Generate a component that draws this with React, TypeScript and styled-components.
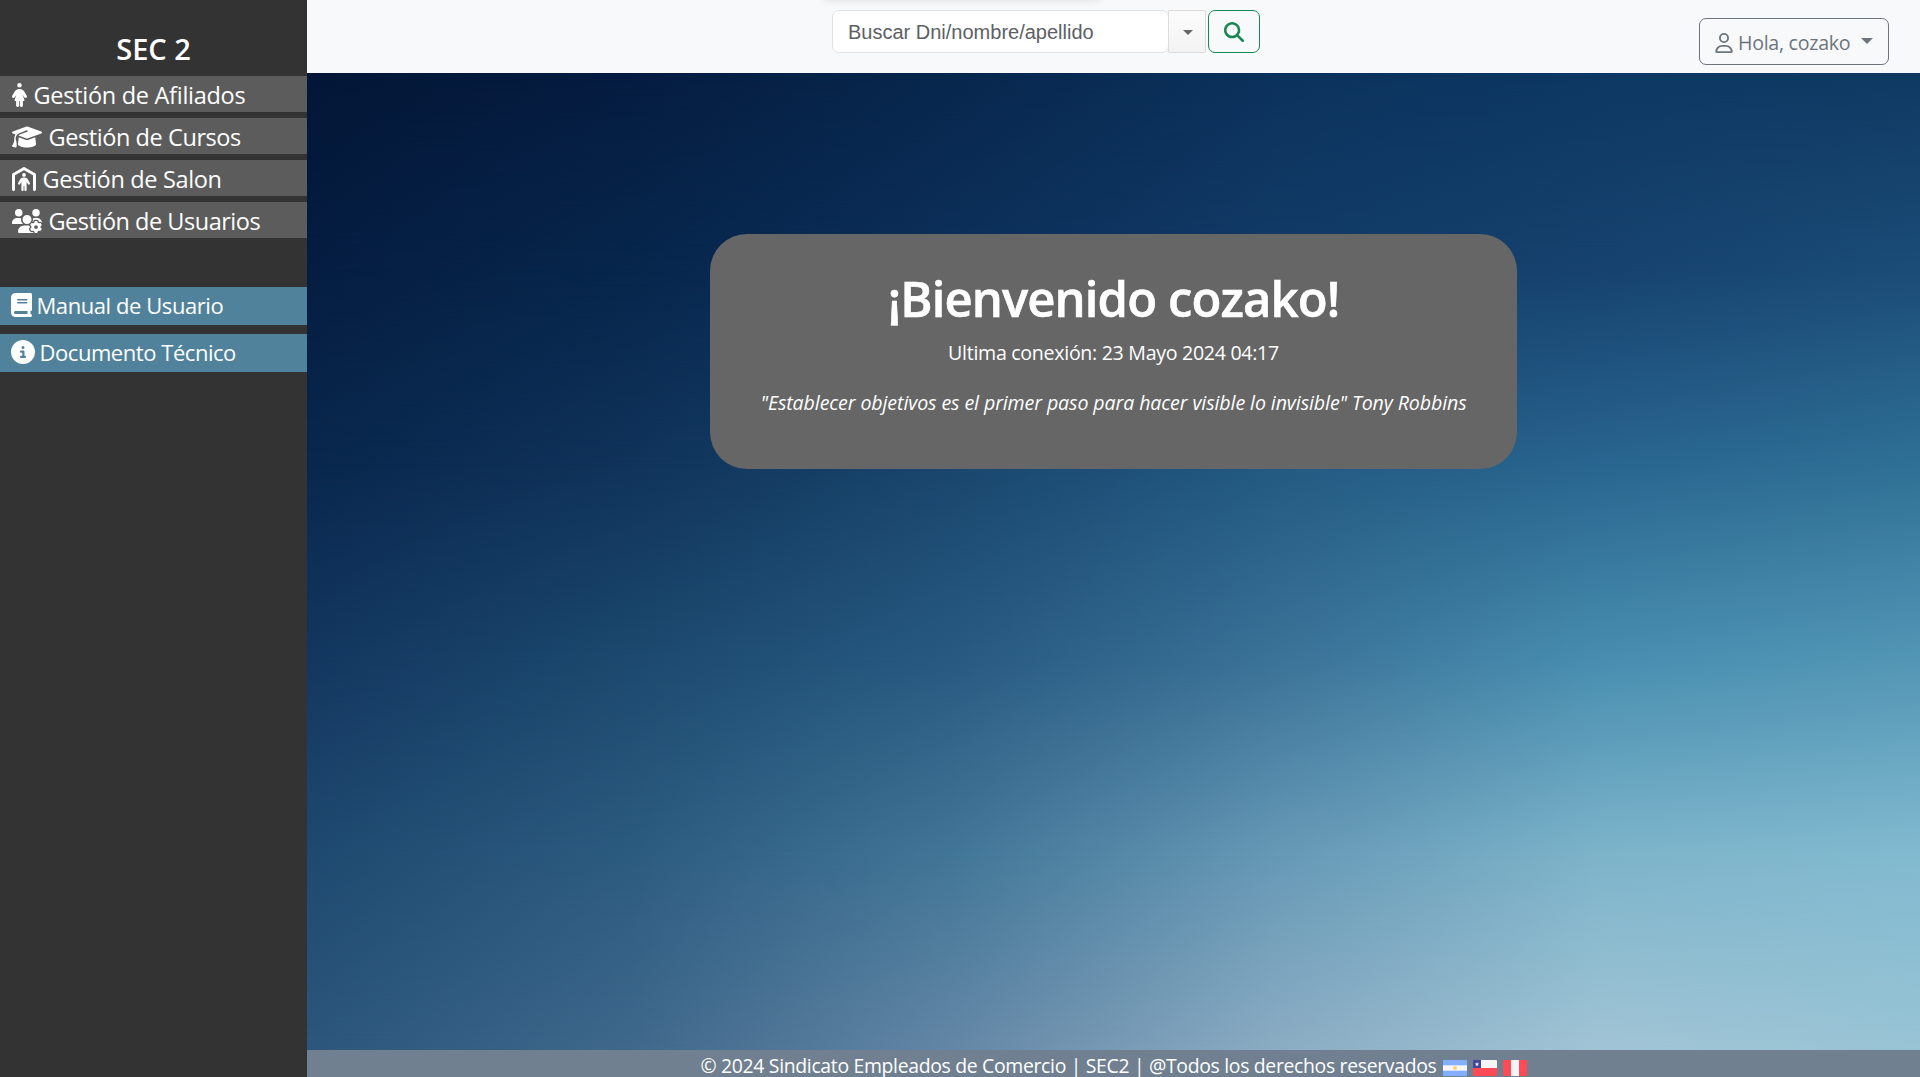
import React from 'react';
import styled, { createGlobalStyle } from 'styled-components';
import {
  FaBook,
  FaCircleInfo,
  FaGraduationCap,
  FaMagnifyingGlass,
  FaPersonDress,
  FaPersonShelter,
  FaRegUser,
  FaUsersGear,
} from 'react-icons/fa6';

const GlobalStyle = createGlobalStyle`
  *, *::before, *::after { box-sizing: border-box; }
  body {
    margin: 0;
    overflow: hidden;
    font-family: 'Segoe UI', 'Open Sans', 'Noto Sans', sans-serif;
    color: #fff;
  }
  h1, h2, p { margin: 0; }
`;

const Page = styled.div`
  display: grid;
  grid-template-columns: 307px 1fr;
  height: 100vh;
`;

const Sidebar = styled.aside`
  display: flex;
  flex-direction: column;
  background: #333;
  padding-top: 29px;
`;

const Brand = styled.h2`
  height: 47px;
  line-height: 40px;
  text-align: center;
  font-size: 29px;
  font-weight: 600;
  letter-spacing: 0;
`;

const Menu = styled.nav<{ $gap: number; $top?: number }>`
  display: flex;
  flex-direction: column;
  gap: ${(p) => p.$gap}px;
  margin-top: ${(p) => p.$top ?? 0}px;
`;

const MenuLink = styled.a<{ $accent?: boolean; $spacing: number; $icon: number }>`
  display: flex;
  align-items: center;
  gap: ${(p) => (p.$accent ? 5 : 6.5)}px;
  height: ${(p) => (p.$accent ? 38 : 36)}px;
  padding: ${(p) => (p.$accent ? '0 0 2px 10.5px' : '2px 0 0 12px')};
  background: ${(p) => (p.$accent ? '#51829b' : '#5c5c5c')};
  font-size: ${(p) => (p.$accent ? 22 : 23.5)}px;
  letter-spacing: ${(p) => p.$spacing}px;
  white-space: nowrap;

  svg {
    flex: none;
    height: 24px;
    width: ${(p) => p.$icon}px;
  }
`;

const Main = styled.div`
  display: grid;
  grid-template-rows: 73px 1fr 27px;
  min-width: 0;
`;

const Header = styled.header`
  display: flex;
  align-items: flex-start;
  justify-content: space-between;
  padding: 10px 31px 0 525px;
  background: #f8f9fb;
  position: relative;

  &::before {
    content: '';
    position: absolute;
    top: -10px;
    left: 517px;
    width: 276px;
    height: 10px;
    box-shadow: 0 0 8px rgba(0, 0, 0, 0.12);
  }
`;

const SearchForm = styled.form`
  display: flex;
  height: 43px;
`;

const SearchInput = styled.input`
  width: 337px;
  padding: 1px 0 0 15px;
  border: 1px solid #dee2e6;
  border-radius: 7px;
  background: #fff;
  font: 20px 'Liberation Sans', Arial, sans-serif;

  &::placeholder {
    color: #5c6065;
    opacity: 1;
  }
`;

const Caret = styled.span<{ $size: number; $color: string }>`
  border: ${(p) => p.$size}px solid transparent;
  border-top-color: ${(p) => p.$color};
  border-bottom: 0;
`;

const FilterToggle = styled.button`
  display: flex;
  align-items: center;
  justify-content: center;
  width: 38px;
  margin-left: -1px;
  padding: 1px 0 0 1px;
  border: 1px solid #dcdcdc;
  border-radius: 2px;
  background: linear-gradient(#fcfcfc, #f3f3f3);
`;

const SearchButton = styled.button`
  display: flex;
  align-items: center;
  justify-content: center;
  width: 52px;
  margin-left: 2px;
  padding: 0;
  border: 1px solid #198754;
  border-radius: 7px;
  background: transparent;
  color: #198754;
  font-size: 20px;
`;

const UserButton = styled.button`
  display: flex;
  align-items: center;
  width: 190px;
  height: 47px;
  margin-top: 8px;
  padding: 2px 0 0 15px;
  border: 1px solid #6c757d;
  border-radius: 7px;
  background: transparent;
  color: #6c757d;
  font-family: inherit;
  font-size: 19.6px;
  letter-spacing: -0.27px;

  svg {
    height: 20px;
    width: 18px;
  }

  span:nth-of-type(1) {
    margin: 0 11px 0 5px;
  }

  span:nth-of-type(2) {
    margin-bottom: 4px;
  }
`;

const Stage = styled.main`
  display: grid;
  min-height: 0;

  > * {
    grid-area: 1 / 1;
  }
`;

const Band = styled.div<{ $colors: string; $from: number; $to: number }>`
  background: linear-gradient(to right, ${(p) => p.$colors});
  mask-image: ${(p) =>
    p.$to === 0
      ? 'none'
      : `linear-gradient(to bottom, transparent ${p.$from}%, #000 ${p.$to}%)`};
`;

const Welcome = styled.section`
  align-self: start;
  justify-self: center;
  display: flex;
  flex-direction: column;
  align-items: center;
  width: 807px;
  height: 235px;
  margin-top: 161px;
  padding-top: 30px;
  border-radius: 37px;
  background: #666;
  z-index: 1;
`;

const Title = styled.h1`
  font-size: 49px;
  line-height: 68px;
  font-weight: 600;
  letter-spacing: -0.9px;
  -webkit-text-stroke: 0.6px #fff;
  white-space: nowrap;
`;

const LastLogin = styled.p`
  margin-top: 6px;
  font-size: 19.6px;
  line-height: 30px;
  letter-spacing: -0.3px;
  white-space: nowrap;
`;

const Quote = styled.p`
  margin-top: 20px;
  font-size: 19.6px;
  line-height: 30px;
  font-style: italic;
  letter-spacing: -0.1px;
  white-space: nowrap;
`;

const Footer = styled.footer`
  display: flex;
  justify-content: center;
  align-items: center;
  background: #708090;
  font-size: 19.4px;
  line-height: 27px;
  letter-spacing: -0.32px;
  white-space: nowrap;

  span {
    padding-top: 4px;
  }

  svg {
    flex: none;
    margin: 8px 0 0 6px;
  }
`;

// Colour samples of the backdrop: each row is blended into the next one.
const backdrop = [
  ['#031737', '#051c40', '#08274d', '#0b325c', '#0d3863', '#0f3a62'],
  ['#051d41', '#07264c', '#0c305b', '#123c67', '#16426f', '#1b4c78'],
  ['#09274d', '#10335a', '#19466d', '#225a82', '#29658f', '#2f7096'],
  ['#133760', '#1c496f', '#285a81', '#3b7297', '#488eb0', '#5396b5'],
  ['#1f4970', '#2c5b80', '#427697', '#6699b6', '#7db4ca', '#82bad0'],
  ['#2c567c', '#3f688b', '#6487a6', '#8bacc3', '#a1c4d5', '#98c4d5'],
];

const modules = [
  { label: 'Gestión de Afiliados', Icon: FaPersonDress, icon: 15, spacing: -0.28 },
  { label: 'Gestión de Cursos', Icon: FaGraduationCap, icon: 30, spacing: -0.42 },
  { label: 'Gestión de Salon', Icon: FaPersonShelter, icon: 24, spacing: -0.34 },
  { label: 'Gestión de Usuarios', Icon: FaUsersGear, icon: 30, spacing: -0.48 },
];

const documents = [
  { label: 'Manual de Usuario', Icon: FaBook, icon: 21, spacing: -0.43 },
  { label: 'Documento Técnico', Icon: FaCircleInfo, icon: 24, spacing: -0.45 },
];

const FlagArgentina = () => (
  <svg width="24" height="16" viewBox="0 0 24 16">
    <rect width="24" height="16" rx="1" fill="#82afff" />
    <rect y="5.3" width="24" height="5.4" fill="#f5f5f5" />
    <circle cx="12" cy="8" r="1.9" fill="#ffd36b" />
  </svg>
);

const FlagChile = () => (
  <svg width="24" height="16" viewBox="0 0 24 16">
    <rect width="24" height="16" rx="1" fill="#ff4b55" />
    <path d="M8 0h15a1 1 0 0 1 1 1v7H8z" fill="#f5f5f5" />
    <path d="M1 0h7v8H0V1a1 1 0 0 1 1-1z" fill="#41479b" />
    <path d="m4 2 .6 1.5 1.6.1-1.2 1 .4 1.5L4 5.3l-1.4.8.4-1.5-1.2-1 1.6-.1z" fill="#f5f5f5" />
  </svg>
);

const FlagPeru = () => (
  <svg width="24" height="16" viewBox="0 0 24 16">
    <rect width="24" height="16" rx="1" fill="#ff4b55" />
    <rect x="8" width="8" height="16" fill="#f5f5f5" />
  </svg>
);

export default function App() {
  const step = 100 / (backdrop.length - 1);
  return (
    <>
      <GlobalStyle />
      <Page>
        <Sidebar>
          <Brand>SEC 2</Brand>
          <Menu $gap={6}>
            {modules.map(({ label, Icon, icon, spacing }) => (
              <MenuLink key={label} $spacing={spacing} $icon={icon}>
                <Icon />
                <span>{label}</span>
              </MenuLink>
            ))}
          </Menu>
          <Menu $gap={9} $top={49}>
            {documents.map(({ label, Icon, icon, spacing }) => (
              <MenuLink key={label} $accent $spacing={spacing} $icon={icon}>
                <Icon />
                <span>{label}</span>
              </MenuLink>
            ))}
          </Menu>
        </Sidebar>
        <Main>
          <Header>
            <SearchForm>
              <SearchInput placeholder="Buscar Dni/nombre/apellido" />
              <FilterToggle type="button">
                <Caret $size={5} $color="#666" />
              </FilterToggle>
              <SearchButton type="button">
                <FaMagnifyingGlass />
              </SearchButton>
            </SearchForm>
            <UserButton>
              <FaRegUser />
              <span>Hola, cozako</span>
              <Caret $size={6} $color="#6c757d" />
            </UserButton>
          </Header>
          <Stage>
            {backdrop.map((row, i) => (
              <Band key={i} $colors={row.join(', ')} $from={(i - 1) * step} $to={i * step} />
            ))}
            <Welcome>
              <Title>¡Bienvenido cozako!</Title>
              <LastLogin>Ultima conexión: 23 Mayo 2024 04:17</LastLogin>
              <Quote>"Establecer objetivos es el primer paso para hacer visible lo invisible" Tony Robbins</Quote>
            </Welcome>
          </Stage>
          <Footer>
            <span>© 2024 Sindicato Empleados de Comercio | SEC2 | @Todos los derechos reservados</span>
            <FlagArgentina />
            <FlagChile />
            <FlagPeru />
          </Footer>
        </Main>
      </Page>
    </>
  );
}
